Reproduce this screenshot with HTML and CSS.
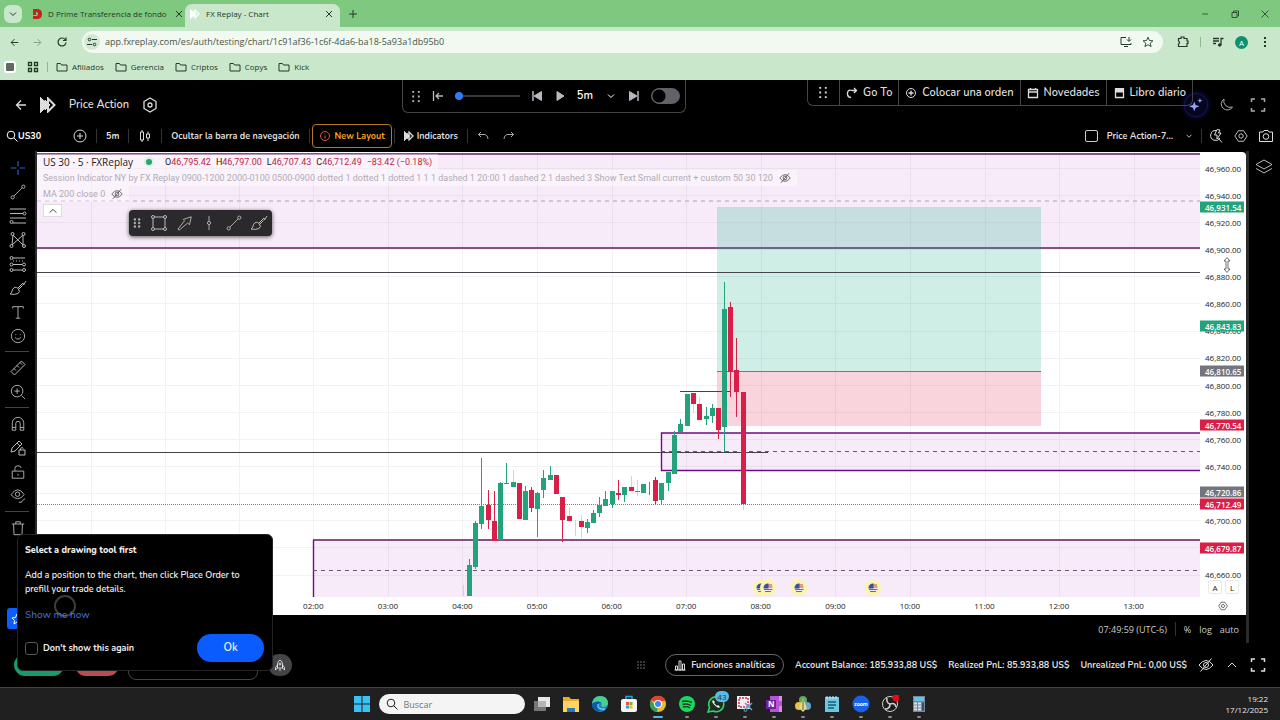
FILE: index.html
```html
<!DOCTYPE html>
<html lang="es">
    <head>
        <meta charset="UTF-8" />
        <meta name="viewport" content="width=device-width, initial-scale=1.0" />
        <title>FX Replay - Chart</title>
        <link rel="stylesheet" href="styles.css">
    </head>
    <body>
        <svg class="sprite" aria-hidden="true">
            <symbol id="close" viewBox="0 0 12 12"><path d="M3 3l6 6M9 3l-6 6" /></symbol>
            <symbol id="down" viewBox="0 0 12 12"><path d="M3 4.500l3 3 3-3" /></symbol>
            <symbol id="up" viewBox="0 0 12 12"><path d="M2 8l4-4 4 4" /></symbol>
            <symbol id="back" viewBox="0 0 12 12"><path d="M11 6H1.500M6 1.500L1.500 6 6 10.500" stroke-width="1.300" /></symbol>
            <symbol id="folder" viewBox="0 0 12 12"><path d="M1 2.500h3.500l1 1.500H11v6H1z" /></symbol>
            <symbol id="logo" viewBox="0 0 16 16"><path class="solid" d="M0 0l8 8-8 8z" /><path d="M8 1.500L14.500 8 8 14.500z" stroke-width="2" /><path class="solid" d="M5 3l5 5-5 5z" /></symbol>
            <symbol id="hex" viewBox="0 0 16 16"><path d="M8 1l6 3.500v7L8 15l-6-3.500v-7z" stroke-width="1.300" /><circle cx="8" cy="8" r="2" stroke-width="1.300" /></symbol>
            <symbol id="hexflat" viewBox="0 0 16 16"><path d="M5 2h6l4 6-4 6H5L1 8z" /><circle cx="8" cy="8" r="2.500" /></symbol>
            <symbol id="grip" viewBox="0 0 10 14"><path class="solid" d="M1 1h2v2H1zM7 1h2v2H7zM1 6h2v2H1zM7 6h2v2H7zM1 11h2v2H1zM7 11h2v2H7z" /></symbol>
            <symbol id="search" viewBox="0 0 12 12"><circle cx="5" cy="5" r="3.800" /><path d="M8 8l3.500 3.500" /></symbol>
            <symbol id="full" viewBox="0 0 16 16"><path d="M1.500 5V2H5M11 2h3.500v3M14.500 11v3H11M5 14H1.500v-3" stroke-width="1.500" /></symbol>
            <symbol id="eyeoff" viewBox="0 0 16 16"><path d="M1 8q7-9 14 0-7 9-14 0z" /><circle cx="8" cy="8" r="2.500" /><path d="M2.500 14.500l11-13" /></symbol>
            <symbol id="line" viewBox="0 0 18 18"><path d="M4.500 13.500l9-9" /><circle cx="3" cy="15" r="1.800" /><circle cx="15" cy="3" r="1.800" /></symbol>
            <symbol id="brush" viewBox="0 0 18 18"><path d="M1 15q2-1 2.500-4.500Q6 6.500 9 9.500t0 5Q6 16 1 15zM9 9l5-5 .5 2L17 2M9.500 10.500l4-4" /></symbol>
            <symbol id="flag" viewBox="0 0 16 16"><circle cx="8" cy="8" r="8" fill="#fbf6a6" /><circle cx="8" cy="8" r="4.500" fill="#eee4ec" /><path d="M8 5h4M8 7h4.500M4 9.500h8.500M5 11.500h6" stroke="#c9485f" /><path d="M8.500 3.500v5H3.500A4.500 4.500 0 0 1 8.500 3.500z" fill="#3c4f9b" /></symbol>
        </svg>

        <header class="browser">
            <div class="tabs">
                <button class="tab-search" aria-label="Buscar pestañas"><svg class="icon s12"><use href="#down" /></svg></button>
                <a class="tab" href="#">
                    <svg class="favicon" viewBox="0 0 10 10"><path d="M1 0h4q5 0 5 5t-5 5H1V7h4q2-2 0-4H4v3H1z" fill="#c5221f" /></svg>
                    <span class="tab-title">D Prime Transferencia de fondo</span>
                    <svg class="icon s12"><use href="#close" /></svg>
                </a>
                <a class="tab tab-active" href="#">
                    <svg class="favicon white"><use href="#logo" /></svg>
                    <span class="tab-title">FX Replay - Chart</span>
                    <svg class="icon s12"><use href="#close" /></svg>
                </a>
                <button class="new-tab" aria-label="Nueva pestaña"><svg class="icon s12" viewBox="0 0 12 12"><path d="M6 2v8M2 6h8" /></svg></button>
                <div class="window-buttons">
                    <button aria-label="Minimizar"><svg class="icon s12" viewBox="0 0 12 12"><path d="M3 6h6" stroke-width="0.700" /></svg></button>
                    <button aria-label="Restaurar"><svg class="icon s12" viewBox="0 0 12 12"><path d="M3 4.500h5v5H3zM4.500 4.500v-1.500h5V8H8" stroke-width="0.800" /></svg></button>
                    <button aria-label="Cerrar"><svg class="icon s12" viewBox="0 0 12 12"><path d="M2.500 2.500l7 7M9.500 2.500l-7 7" stroke-width="0.800" /></svg></button>
                </div>
            </div>
            <div class="address-row">
                <button aria-label="Atrás"><svg class="icon s9"><use href="#back" /></svg></button>
                <button class="forward" aria-label="Adelante"><svg class="icon s9 flip"><use href="#back" /></svg></button>
                <button aria-label="Recargar"><svg class="icon s12" viewBox="0 0 12 12"><path d="M9.500 4A4 4 0 1 0 10 6.500M10 1.500v3H7" stroke-width="1.200" /></svg></button>
                <div class="address">
                    <span class="site-info"><svg class="icon s12" viewBox="0 0 12 12"><circle cx="3.500" cy="3.500" r="1.300" /><circle cx="8.500" cy="8.500" r="1.300" /><path d="M6 3.500h5M1 8.500h5" /></svg></span>
                    <input class="url" type="text" aria-label="Dirección" value="app.fxreplay.com/es/auth/testing/chart/1c91af36-1c6f-4da6-ba18-5a93a1db95b0">
                    <svg class="icon s12" viewBox="0 0 12 12"><path d="M6 1.500H1v7h10V7M4 10.500h4M9 1v4M7 3.500l2 2 2-2" /></svg>
                    <svg class="icon s12" viewBox="0 0 12 12"><path d="M6 1.200l1.400 3.300 3.500.3-2.700 2.300.9 3.500L6 8.700l-3.100 1.900.9-3.500L1.100 4.800l3.500-.3z" stroke-width="0.900" /></svg>
                </div>
                <div class="extensions">
                    <svg class="icon s12" viewBox="0 0 12 12"><path d="M1.500 2.500H4V1h3v1.500h3V5h1v2.500h-1v3H1.500V8q2-1.500 0-3z" stroke-width="1.200" /></svg>
                    <span class="tick"></span>
                    <svg class="icon s12" viewBox="0 0 12 12"><path d="M1 2.500h6M1 5h6M1 7.500h3M9 9V2.500h2.500" stroke-width="1.300" /><circle class="solid" cx="7.700" cy="9" r="1.300" /></svg>
                    <span class="avatar">A</span>
                    <svg class="icon s12" viewBox="0 0 12 12"><path class="solid" d="M5 1h2v2H5zM5 5h2v2H5zM5 9h2v2H5z" stroke="none" /></svg>
                </div>
            </div>
            <nav class="bookmarks">
                <span class="app-square"></span>
                <svg class="icon s12" viewBox="0 0 12 12"><path d="M1.500 1.500h3v3h-3zM7.500 1.500h3v3h-3zM1.500 7.500h3v3h-3zM7.500 7.500h3v3h-3z" stroke-width="1.300" /></svg>
                <span class="tick"></span>
                <a href="#"><svg class="icon s12"><use href="#folder" /></svg>Afiliados</a>
                <a href="#"><svg class="icon s12"><use href="#folder" /></svg>Gerencia</a>
                <a href="#"><svg class="icon s12"><use href="#folder" /></svg>Criptos</a>
                <a href="#"><svg class="icon s12"><use href="#folder" /></svg>Copys</a>
                <a href="#"><svg class="icon s12"><use href="#folder" /></svg>Kick</a>
            </nav>
        </header>

        <div class="app">
            <div class="app-header">
                <button aria-label="Volver"><svg class="icon s12"><use href="#back" /></svg></button>
                <svg class="icon s16"><use href="#logo" /></svg>
                <h1 class="session-name">Price Action</h1>
                <button aria-label="Ajustes"><svg class="icon s16"><use href="#hex" /></svg></button>
                <div class="header-right">
                    <button class="ai" aria-label="Asistente"><svg class="icon s16" viewBox="0 0 16 16"><path class="solid" d="M6 4l1.500 4L12 9.500 7.500 11 6 15l-1.500-4L0 9.500 4.500 8zM12.500 0l.8 2.200 2.200.8-2.200.8-.8 2.200-.8-2.200L9.500 3l2.200-.8z" stroke="none" /></svg></button>
                    <button aria-label="Tema"><svg class="icon s16" viewBox="0 0 16 16"><path d="M6 2a6 6 0 1 0 8.500 8A6.500 6.500 0 0 1 6 2z" /></svg></button>
                    <button aria-label="Pantalla completa"><svg class="icon s16"><use href="#full" /></svg></button>
                </div>
                <div class="playback">
                    <svg class="icon grip"><use href="#grip" /></svg>
                    <button aria-label="Al inicio"><svg class="icon s12" viewBox="0 0 12 12"><path d="M1.500 1v10M11 6H4M7 3L4 6l3 3" stroke-width="1.300" /></svg></button>
                    <input class="speed" type="range" min="0" max="100" value="0" aria-label="Velocidad">
                    <button aria-label="Vela anterior"><svg class="icon s12" viewBox="0 0 12 12"><path d="M2 1v10" stroke-width="1.500" /><path class="solid" d="M10.500 1.500v9L3 6z" /></svg></button>
                    <button aria-label="Reproducir"><svg class="icon s12" viewBox="0 0 12 12"><path class="solid" d="M3 1.500v9L10 6z" /></svg></button>
                    <button class="step">5m<svg class="icon s12"><use href="#down" /></svg></button>
                    <button aria-label="Vela siguiente"><svg class="icon s12" viewBox="0 0 12 12"><path d="M10 1v10" stroke-width="1.500" /><path class="solid" d="M1.500 1.500v9L9 6z" /></svg></button>
                    <input class="switch" type="checkbox" aria-label="Modo automático">
                </div>
                <div class="actions">
                    <span class="action"><svg class="icon grip"><use href="#grip" /></svg></span>
                    <button class="action"><svg class="icon s12" viewBox="0 0 12 12"><path d="M5 10.500Q1 10 1.500 6T6 3.500h4M8 1l2.500 2.500L8 6" stroke-width="1.300" /></svg>Go To</button>
                    <button class="action"><svg class="icon s12" viewBox="0 0 12 12"><circle cx="6" cy="6" r="4.500" /><path d="M6 3.500v5M3.500 6h5" stroke-width="1.300" /></svg>Colocar una orden</button>
                    <button class="action"><svg class="icon s12" viewBox="0 0 12 12"><path d="M1.500 2.500h9v8h-9zM1.500 5h9M3.500 1v2M8.500 1v2" stroke-width="1.300" /></svg>Novedades</button>
                    <button class="action"><svg class="icon s12" viewBox="0 0 12 12"><path d="M2.500 2h8v8.500h-8z" stroke-width="1.300" /><path class="solid" d="M2.500 1.500h8V5h-8z" /></svg>Libro diario</button>
                </div>
            </div>

            <div class="toolbar">
                <button class="symbol"><svg class="icon s12"><use href="#search" /></svg>US30</button>
                <button aria-label="Comparar"><svg class="icon s14" viewBox="0 0 14 14"><circle cx="7" cy="7" r="6" /><path d="M7 4v6M4 7h6" /></svg></button>
                <span class="sep"></span>
                <button>5m</button>
                <span class="sep"></span>
                <button aria-label="Velas"><svg class="icon s14" viewBox="0 0 14 14"><path d="M2.500 3h3v8h-3zM4 1v2M4 11v2M8.500 5h3v4h-3zM10 2.500V5M10 9v3" /></svg></button>
                <span class="sep"></span>
                <button>Ocultar la barra de navegación</button>
                <div class="layout-group">
                    <span class="sep"></span>
                    <button class="new-layout"><svg class="icon s12" viewBox="0 0 12 12"><circle cx="6" cy="6" r="4.500" /><path d="M6 3.500v.8M6 5.500V8.500" /></svg>New Layout</button>
                    <span class="sep"></span>
                </div>
                <button class="indicators"><svg class="icon s10"><use href="#logo" /></svg>Indicators</button>
                <span class="sep"></span>
                <button class="muted" aria-label="Deshacer"><svg class="icon s12" viewBox="0 0 12 12"><path d="M4 2L1.500 4.500 4 7M1.500 4.500H7q3.500 0 4 4.500" /></svg></button>
                <button class="muted redo" aria-label="Rehacer"><svg class="icon s12 flip" viewBox="0 0 12 12"><path d="M4 2L1.500 4.500 4 7M1.500 4.500H7q3.500 0 4 4.500" /></svg></button>
                <div class="toolbar-right">
                    <label class="layout-check"><input type="checkbox">Price Action-7...</label>
                    <svg class="icon s10"><use href="#down" /></svg>
                    <span class="sep"></span>
                    <svg class="icon s14" viewBox="0 0 14 14"><path d="M7 1.500A5 5 0 1 0 11 9M9.500 9.500l3.500 4M8 .5L5.500 6H8v4l4-6H9.500L11 1z" /></svg>
                    <svg class="icon s14"><use href="#hexflat" /></svg>
                    <svg class="icon s14" viewBox="0 0 14 14"><path d="M.5 3h3.500l1-1.500h4L10 3h3.500v9.500H.5z" /><circle cx="7" cy="7.500" r="2.800" /></svg>
                </div>
            </div>

            <main class="workspace">
                <aside class="tools">
                    <button class="tool cross" aria-label="Cursor"><svg class="icon s16" viewBox="0 0 18 18"><path d="M9 1v6M9 11v6M1 9h6M11 9h6" stroke-width="1.300" /></svg></button>
                    <button class="tool" aria-label="Línea"><svg class="icon s16"><use href="#line" /></svg></button>
                    <button class="tool" aria-label="Fibonacci"><svg class="icon s18" viewBox="0 0 18 18"><path d="M1 2h16M1 6.500h13M1 11h16M4 16h13" /><circle cx="15.500" cy="6.500" r="1.500" /><circle cx="2.500" cy="15" r="1.500" /></svg></button>
                    <button class="tool" aria-label="Patrones"><svg class="icon s18" viewBox="0 0 18 18"><path d="M3 14L4 4l10 10V4L3 14M4 4l5 5M9 9l5 5" /><circle cx="3.500" cy="3" r="1.500" /><circle cx="14.500" cy="3" r="1.500" /><circle cx="2.500" cy="15" r="1.500" /><circle cx="15" cy="15" r="1.500" /></svg></button>
                    <button class="tool" aria-label="Previsión"><svg class="icon s18" viewBox="0 0 18 18"><path d="M4 3h12M4 9.500h9M4 15h9" /><path d="M4 6h10" stroke-dasharray="1 2" /><circle cx="2.500" cy="3" r="1.500" /><circle cx="2.500" cy="9.500" r="1.500" /><circle cx="15" cy="9.500" r="1.500" /><circle cx="2.500" cy="15" r="1.500" /><circle cx="15" cy="15" r="1.500" /></svg></button>
                    <button class="tool" aria-label="Pincel"><svg class="icon s18"><use href="#brush" /></svg></button>
                    <button class="tool" aria-label="Texto"><svg class="icon s16" viewBox="0 0 18 18"><path d="M3 5V3h12v2M9 3v13M6.500 16h5" /></svg></button>
                    <button class="tool" aria-label="Iconos"><svg class="icon s16" viewBox="0 0 18 18"><circle cx="9" cy="9" r="7.500" /><path d="M5.500 10.500q3.500 4 7 0M6.500 7v1M11.500 7v1" /></svg></button>
                    <hr>
                    <button class="tool" aria-label="Medir"><svg class="icon s18" viewBox="0 0 18 18"><path d="M2 12.500L12.500 2 16 5.500 5.500 16zM5 9.500l2 2M8 6.500l2 2M11 3.500l2 2" /></svg></button>
                    <button class="tool" aria-label="Acercar"><svg class="icon s16" viewBox="0 0 18 18"><circle cx="8" cy="8" r="6.500" /><path d="M8 5v6M5 8h6M13 13l4 4" /></svg></button>
                    <hr>
                    <button class="tool" aria-label="Imán"><svg class="icon s16" viewBox="0 0 18 18"><path d="M2.500 16V8a6.500 6.500 0 0 1 13 0v8h-4V8.500a2.500 2.500 0 0 0-5 0V16zM2.500 13h4M11.500 13h4" /></svg></button>
                    <button class="tool" aria-label="Modo dibujo"><svg class="icon s18" viewBox="0 0 18 18"><path d="M2 13l1-4 7-7 3 3-7 7zM8 4l3 3M10 11h6v5h-6zM11.500 11V9.500q1.500-2 3 0" /></svg></button>
                    <button class="tool" aria-label="Bloquear"><svg class="icon s16" viewBox="0 0 18 18"><path d="M2.500 8h13v8h-13zM5.500 8V5q0-3 3.500-3t3.500 2.500M9 11v2" /></svg></button>
                    <button class="tool" aria-label="Ocultar"><svg class="icon s16" viewBox="0 0 18 18"><path d="M1 7.500q8-11 15 0-7 9-15 0z" /><circle cx="8.500" cy="7" r="2.500" /><path d="M10 16q4 1 4-2l3-2" /></svg></button>
                    <hr>
                    <button class="tool" aria-label="Eliminar"><svg class="icon s16" viewBox="0 0 18 18"><path d="M2 4.500h14M6.500 4.500V2h5v2.500M4 4.500l.5 12h9l.5-12" /></svg></button>
                </aside>

                <div class="chart-column">
                    <div class="chart">
                        <div class="plot">
                            <svg class="plot-svg" viewBox="37 152 1163 445" preserveAspectRatio="none">
                                <path class="grid" d="M37 168.500H1200M37 195.500H1200M37 222.500H1200M37 249.500H1200M37 276.500H1200M37 303.500H1200M37 331.500H1200M37 358.500H1200M37 385.500H1200M37 412.500H1200M37 439.500H1200M37 466.500H1200M37 493.500H1200M37 520.500H1200M37 547.500H1200M37 575.500H1200" />
                                <path class="grid" d="M91.500 152V597M165.500 152V597M239.500 152V597M313.500 152V597M388.500 152V597M462.500 152V597M537.500 152V597M612.500 152V597M686.500 152V597M761.500 152V597M835.500 152V597M910.500 152V597M985.500 152V597M1059.500 152V597M1134.500 152V597" />

                                <!-- supply and demand zones -->
                                <path class="zone" d="M37 154H1200V248H37zM661 433H1200V470H661zM313 540H1200V597H313z" />
                                <path class="zone-edge" d="M37 154H1200M37 248H1200M313 540H1200" />
                                <path class="zone-box" d="M1200 433H661.500V470.500H1200M313.500 540V597" />
                                <path class="zone-mid faint" d="M37 201H1200" />
                                <path class="zone-mid" d="M661 451.500H1200M313 570.500H1200" />

                                <!-- position -->
                                <path fill="#0cac80" fill-opacity="0.200" d="M717 207H1041V372H717z" />
                                <path fill="#e0284f" fill-opacity="0.200" d="M717 372H1041V426H717z" />
                                <path class="level" d="M37 272.500H1200M37 452.500H768M680 391.500H730" />
                                <path class="level entry" d="M717 371.500H1041" />
                                <path class="last-price" d="M37 504.500H1200" />

                                <path class="wick pale" d="M463.500 585V596M513.500 470V482M569.500 507V516M575.500 520V536M581.500 515V538M631.500 476V487M637.500 480V496M693.500 404V413M699.500 397V404M743.500 505V510" />
                                <path class="wick up" d="M469.500 559V566M475.500 521V569M481.500 458V529M500.500 482V483M506.500 463V484M525.500 486V491M537.500 492V537M543.500 470V498M550.500 466V475M587.500 519V533M593.500 510V513M599.500 497V517M605.500 491V499M612.500 504V508M624.500 495V502M649.500 482V495M661.500 500V504M668.500 483V491M674.500 431V435M680.500 419V424M706.500 407V425M712.500 404V423M724.500 282V452M504 483.500H509M635 491.500H640" />
                                <path class="wick dn" d="M488.500 490V529M494.500 491V521M531.500 487V512M562.500 520V542M618.500 480V500M655.500 477V504M718.500 430V439M730.500 302V397M736.500 338V417" />
                                <path class="body up" d="M469.500 565V596M475.500 523V567M481.500 506V524M500.500 483V540M513.500 482V487M525.500 491V520M537.500 493V509M543.500 478V490M550.500 475V480M587.500 522V528M593.500 513V523M599.500 505V513M605.500 499V506M612.500 491V504M624.500 487V495M643.500 484V493M661.500 483V500M668.500 472V483M674.500 435V474M680.500 424V432M687.500 394V426M706.500 416V419M712.500 408V416M724.500 309V427" />
                                <path class="body dn" d="M488.500 505V520M494.500 521V541M519.500 483V519M531.500 490V508M556.500 475V494M562.500 497V520M569.500 516V521M581.500 521V527M618.500 493V495M631.500 487V491M655.500 480V501M693.500 393V404M699.500 404V420M718.500 408V430M730.500 307V372M736.500 370V392M743.500 392V504" />
                                <g>
                                    <use href="#flag" x="753" y="580" width="16" height="16" />
                                    <use href="#flag" x="760" y="580" width="16" height="16" />
                                    <use href="#flag" x="791" y="580" width="16" height="16" />
                                    <use href="#flag" x="865" y="580" width="16" height="16" />
                                </g>
                            </svg>

                            <div class="legend">
                                <p class="legend-main">
                                    <strong>US 30 · 5 · FXReplay</strong>
                                    <span class="dot"></span>
                                    <span class="ohlc">O<b>46,795.42</b></span>
                                    <span class="ohlc">H<b>46,797.00</b></span>
                                    <span class="ohlc">L<b>46,707.43</b></span>
                                    <span class="ohlc">C<b>46,712.49</b></span>
                                    <span class="ohlc"><b>−83.42 (−0.18%)</b></span>
                                </p>
                                <p class="legend-row">Session Indicator NY by FX Replay 0900-1200 2000-0100 0500-0900 dotted 1 dotted 1 dotted 1 1 1 dashed 1 20:00 1 dashed 2 1 dashed 3 Show Text Small current + custom 50 30 120 <svg class="icon s12"><use href="#eyeoff" /></svg></p>
                                <p class="legend-row">MA 200 close 0 <svg class="icon s12"><use href="#eyeoff" /></svg></p>
                                <button class="collapse" aria-label="Contraer"><svg class="icon s10"><use href="#up" /></svg></button>
                            </div>

                            <div class="favorites">
                                <svg class="icon s10"><use href="#grip" /></svg>
                                <button aria-label="Rectángulo"><svg class="icon s18" viewBox="0 0 18 18"><path d="M4.500 3h9M4.500 15h9M3 4.500v9M15 4.500v9" /><circle cx="3" cy="3" r="1.500" /><circle cx="15" cy="3" r="1.500" /><circle cx="3" cy="15" r="1.500" /><circle cx="15" cy="15" r="1.500" /></svg></button>
                                <button aria-label="Flecha"><svg class="icon s16" viewBox="0 0 18 18"><path d="M1 16L8.500 6.500 7 5l9-3-2 9-2-2L2.500 17z" /></svg></button>
                                <button aria-label="Línea vertical"><svg class="icon s16" viewBox="0 0 18 18"><path d="M9 1v6M9 11v6" /><circle cx="9" cy="9" r="1.800" /></svg></button>
                                <button aria-label="Línea de tendencia"><svg class="icon s16"><use href="#line" /></svg></button>
                                <button aria-label="Pincel"><svg class="icon s18"><use href="#brush" /></svg></button>
                            </div>
                        </div>

                        <div class="price-axis">
                            <span>46,960.00</span>
                            <span>46,940.00</span>
                            <span>46,920.00</span>
                            <span>46,900.00</span>
                            <span>46,880.00</span>
                            <span>46,860.00</span>
                            <span>46,840.00</span>
                            <span>46,820.00</span>
                            <span>46,800.00</span>
                            <span>46,780.00</span>
                            <span>46,760.00</span>
                            <span>46,740.00</span>
                            <span></span>
                            <span>46,700.00</span>
                            <span></span>
                            <span>46,660.00</span>
                            <b class="tag green" style="top: 12.4%">46,931.54</b>
                            <b class="tag green" style="top: 39.2%">46,843.83</b>
                            <b class="tag gray" style="top: 49.3%">46,810.65</b>
                            <b class="tag red" style="top: 61.4%">46,770.54</b>
                            <b class="tag gray" style="top: 76.5%">46,720.86</b>
                            <b class="tag red" style="top: 79.1%">46,712.49</b>
                            <b class="tag red" style="top: 88.9%">46,679.87</b>
                            <div class="scale-modes"><button>A</button><button>L</button></div>
                            <svg class="icon resize" viewBox="0 0 8 16"><path d="M4 .5l3 3.500H5v8h2l-3 3.500L1 12h2V4H1z" fill="#fff" /></svg>
                        </div>

                        <div class="time-axis">
                            <span>02:00</span>
                            <span>03:00</span>
                            <span>04:00</span>
                            <span>05:00</span>
                            <span>06:00</span>
                            <span>07:00</span>
                            <span>08:00</span>
                            <span>09:00</span>
                            <span>10:00</span>
                            <span>11:00</span>
                            <span>12:00</span>
                            <span>13:00</span>
                        </div>
                        <button class="axis-settings" aria-label="Ajustes de escala"><svg class="icon s10"><use href="#hexflat" /></svg></button>
                    </div>
                    <div class="chart-footer">
                        <span>07:49:59 (UTC-6)</span>
                        <span class="sep"></span>
                        <button>%</button>
                        <button>log</button>
                        <button>auto</button>
                    </div>
                </div>

                <aside class="side"><button aria-label="Capas"><svg class="icon s18" viewBox="0 0 18 18"><path d="M9 2l8 4.500L9 11 1 6.500zM1 10.500L9 15l8-4.500" /></svg></button></aside>
            </main>

            <footer class="account">
                <button class="pill buy" aria-label="Comprar"></button>
                <button class="pill sell" aria-label="Vender"></button>
                <button class="pill size" aria-label="Tamaño"></button>
                <button class="rocket" aria-label="Orden rápida"><svg class="icon s12" viewBox="0 0 12 12"><path d="M3.500 9V4.500Q4 2 6 1q2 1 2.500 3.500V9zM3.500 6L1.500 8.500V11L3.500 9M8.500 6l2 2.500V11l-2-2M5 11h2" /><circle cx="6" cy="5" r="1" /></svg></button>
                <div class="account-right">
                    <svg class="icon s10 dots" viewBox="0 0 10 10"><path class="solid" d="M1 1h2v2H1zM4 1h2v2H4zM7 1h2v2H7zM1 4h2v2H1zM4 4h2v2H4zM7 4h2v2H7zM1 7h2v2H1zM4 7h2v2H4zM7 7h2v2H7z" /></svg>
                    <button class="analytics"><svg class="icon s12" viewBox="0 0 12 12"><path d="M1.500 7h2v4h-2zM5 2h2v9H5zM8.500 5h2v6h-2zM.5 11h11" /></svg>Funciones analíticas</button>
                    <span>Account Balance: 185.933,88 US$</span>
                    <span>Realized PnL: 85.933,88 US$</span>
                    <span>Unrealized PnL: 0,00 US$</span>
                    <div class="account-icons">
                        <button aria-label="Ocultar saldo"><svg class="icon s16"><use href="#eyeoff" /></svg></button>
                        <button aria-label="Expandir"><svg class="icon s12"><use href="#up" /></svg></button>
                        <button aria-label="Pantalla completa"><svg class="icon s16"><use href="#full" /></svg></button>
                    </div>
                </div>
            </footer>

            <button class="star" aria-label="Favoritos"><svg class="icon s12" viewBox="0 0 12 12"><path d="M6 1l1.500 3.500 3.500.5-2.500 2.500.5 3.500L6 9l-3 2 .5-3.500L1 5l3.500-.5z" /></svg></button>
            <section class="popup" role="dialog" aria-labelledby="popup-title">
                <h2 class="popup-title" id="popup-title">Select a drawing tool first</h2>
                <p class="popup-text">Add a position to the chart, then click Place Order to prefill your trade details.</p>
                <a class="popup-link" href="#">Show me how</a>
                <div class="popup-bottom">
                    <label><input type="checkbox">Don't show this again</label>
                    <button class="ok">Ok</button>
                </div>
                <span class="ring"></span>
            </section>
        </div>

        <footer class="taskbar">
            <div class="task-items">
                <svg class="task" viewBox="0 0 18 18"><path d="M1 1h7.500v7.500H1zM9.500 1H17v7.500H9.500zM1 9.500h7.500V17H1zM9.500 9.500H17V17H9.500z" fill="#3cc1f5" /></svg>
                <label class="task-search"><svg class="icon s12"><use href="#search" /></svg><input type="text" placeholder="Buscar" aria-label="Buscar"></label>
                <svg class="task" viewBox="0 0 18 18"><path d="M1 6h12v10H1z" fill="#777" /><path d="M5 2h12v10H5z" fill="#e8e8e8" /><path d="M5 6h8v6H5z" fill="#b5b5b5" /></svg>
                <svg class="task" viewBox="0 0 18 18"><path d="M1 2h6l2 2h8v13H1z" fill="#e9a92b" /><path d="M1 6h16v11H1z" fill="#fcd462" /><path d="M5 13h8v4H5z" fill="#2a78b8" /></svg>
                <svg class="task" viewBox="0 0 18 18"><circle cx="9" cy="9" r="8" fill="#1b83d1" /><path d="M1 8Q3 1 9 1q8 0 8 8-1 3-5 3-3-1-1-3-1-4-10-1z" fill="#49ce8c" /><path d="M7 9q-3 5 3 7-8 1-9-6 3-5 9-3z" fill="#0c59a4" /><path d="M7 9q-1 6 7 5" fill="none" stroke="#9be5f0" /></svg>
                <svg class="task" viewBox="0 0 18 18"><path d="M6 5V1.500h6V5" fill="none" stroke="#28a0df" stroke-width="1.500" /><rect x="1" y="4" width="16" height="13" rx="2" fill="#f4f4f4" /><path d="M6 7h3v3H6z" fill="#ef5432" /><path d="M9.500 7h3v3h-3z" fill="#7cb82f" /><path d="M6 10.500h3v3H6z" fill="#20a4e8" /><path d="M9.500 10.500h3v3h-3z" fill="#fdb813" /></svg>
                <span class="running current"><svg class="task" viewBox="0 0 18 18"><circle cx="9" cy="9" r="8" fill="#e7bd29" /><path d="M9 9L2 5a8 8 0 0 1 14.500 1H9z" fill="#df4332" /><path d="M9 9l-1 8A8 8 0 0 1 2 5l4 6z" fill="#34a050" /><circle cx="9" cy="9" r="4" fill="#fff" /><circle cx="9" cy="9" r="3" fill="#4384ee" /></svg></span>
                <span class="running"><svg class="task" viewBox="0 0 18 18"><circle cx="9" cy="9" r="8" fill="#1ed760" /><path d="M4 6.500q5-1.500 10 1M4.500 9.500q4-1.500 8.500 1M5 12q4-1 7 .8" fill="none" stroke="#163b21" stroke-width="1.400" /></svg></span>
                <span class="running"><svg class="task" viewBox="0 0 18 18"><path d="M1 17l1.500-4.500A7.500 7.500 0 1 1 6 16z" fill="#19321f" stroke="#32d366" stroke-width="1.600" /><path d="M6 5q-2 2 2 5.500t5 1.500l-2-2-1 1-3-3 1-1z" fill="#fff" /></svg><b class="badge">43</b></span>
                <span class="running"><svg class="task" viewBox="0 0 18 18"><path d="M1 1h13v13H1z" fill="#f1edf0" /><path d="M3 3h9v9H3z" fill="none" stroke="#c73554" stroke-dasharray="2 1" stroke-width="1.500" /><path d="M9 8l7 7M16 8l-6 6" stroke="#5ba7d0" stroke-width="1.500" /><circle cx="9.500" cy="15" r="1.500" fill="none" stroke="#5ba7d0" /></svg></span>
                <span class="running"><svg class="task" viewBox="0 0 18 18"><path d="M5 1h12v16H5z" fill="#b454d6" /><path d="M14 1h3v5h-3zM14 11h3v6h-3z" fill="#d88cec" /><path d="M1 5h10v9H1z" fill="#71219c" /><text x="3" y="12" fill="#fff" font-size="8" font-weight="700" font-family="Open Sans, sans-serif">N</text></svg></span>
                <span class="running"><svg class="task" viewBox="0 0 18 18"><circle cx="9" cy="5" r="4" fill="#5ba75c" /><circle cx="5" cy="11" r="4" fill="#e4c448" /><circle cx="13" cy="11" r="4" fill="#62a4cf" /><path d="M9 3l4 10-4 4-4-4z" fill="#eed781" /><path d="M9 5v10" stroke="#4d6a6a" /></svg></span>
                <span class="running"><svg class="task" viewBox="0 0 18 18"><path d="M2 2h14v15H2z" fill="#6cc8de" /><path d="M4 1v3M7 1v3M10 1v3M13 1v3" stroke="#d9f3f8" /><path d="M5 7h8M5 10h8M5 13h6" stroke="#175d7a" stroke-width="1.300" /></svg></span>
                <span class="running"><svg class="task" viewBox="0 0 18 18"><circle cx="9" cy="9" r="8.500" fill="#1861e8" /><text x="9" y="11" text-anchor="middle" fill="#fff" font-size="5" font-weight="700" font-family="Open Sans, sans-serif">zoom</text></svg></span>
                <span class="running"><svg class="task" viewBox="0 0 18 18"><circle cx="9" cy="9" r="7.500" fill="#1c1c1c" stroke="#cfcfcf" /><path d="M9 9Q5 8 6 3M9 9q5-2 6 3M9 9q0 5-5 5" fill="none" stroke="#cfcfcf" stroke-width="1.600" /><circle cx="15" cy="3" r="3.500" fill="#e50914" /></svg></span>
                <span class="running"><svg class="task" viewBox="0 0 18 18"><path d="M3 1h12v16H3z" fill="#748a9a" /><path d="M4 2h10v4H4z" fill="#68c1e4" /><path d="M4 7.500h3v2H4zM8 7.500h3v2H8zM4 10.500h3v2H4zM8 10.500h3v2H8zM4 13.500h3v2H4zM8 13.500h3v2H8z" fill="#dce4e9" /><path d="M12 7.500h2v8h-2z" fill="#355169" /></svg></span>
            </div>
            <div class="clock"><time>19:22</time><time>17/12/2025</time></div>
        </footer>
    </body>
</html>
```

FILE: styles.css
```css
* {
    box-sizing: border-box;
    margin: 0;
    padding: 0;
}
body {
    display: flex;
    flex-direction: column;
    height: 100vh;
    min-height: 600px;
    overflow: hidden;
    background-color: #000;
    color: #ddd;
    font-family: "Nunito", "Lato", sans-serif;
    font-size: 11px;
    line-height: 14px;
}
button {
    display: flex;
    align-items: center;
    border: none;
    background: none;
    color: inherit;
    font: inherit;
    white-space: nowrap;
    cursor: pointer;
}
input {
    font: inherit;
}
a {
    color: inherit;
    text-decoration: none;
}
.sprite {
    position: absolute;
    width: 0;
    height: 0;
}
.icon {
    flex: none;
    fill: none;
    stroke: currentColor;
}
.solid {
    fill: currentColor;
}
.s9 { width: 9px; height: 9px; }
.s10 { width: 10px; height: 10px; }
.s12 { width: 12px; height: 12px; }
.s14 { width: 14px; height: 14px; }
.s16 { width: 16px; height: 16px; }
.s18 { width: 18px; height: 18px; }
.flip {
    transform: scaleX(-1);
}

/* browser */
.browser {
    flex: none;
    background-color: #c9e7ca;
    color: #26382a;
    font-family: "Segoe UI", "Open Sans", sans-serif;
    font-size: 8px;
    line-height: 12px;
}
.tabs {
    display: flex;
    align-items: center;
    height: 27px;
    padding-left: 4px;
    background-color: #7ec87f;
}
.tab-search {
    justify-content: center;
    width: 18px;
    height: 18px;
    border-radius: 6px;
    background-color: #c9e7ca;
}
.tab {
    display: flex;
    align-items: center;
    gap: 6px;
    width: 163px;
    height: 23px;
    margin-top: 4px;
    padding: 0 8px 4px 10px;
}
.tab-active {
    width: 155px;
    padding: 0 5px 4px;
    border-radius: 7px 7px 0 0;
    background-color: #c9e7ca;
}
.favicon {
    flex: none;
    width: 10px;
    height: 10px;
}
.white {
    color: #fff;
    fill: none;
    stroke: #fff;
}
.tab-title {
    flex: 1;
    white-space: nowrap;
}
.new-tab {
    margin-left: 7px;
}
.window-buttons {
    display: flex;
    gap: 18px;
    margin-left: auto;
    padding-right: 9px;
}
.address-row {
    display: flex;
    align-items: center;
    gap: 14px;
    height: 30px;
    padding: 0 10px;
}
.forward {
    color: #82a385;
}
.address {
    display: flex;
    flex: 1;
    align-items: center;
    gap: 10px;
    height: 22px;
    padding: 0 9px 0 2px;
    border-radius: 11px;
    background-color: #f1f9f1;
}
.site-info {
    display: flex;
    align-items: center;
    justify-content: center;
    width: 16px;
    height: 16px;
    border-radius: 8px;
    background-color: #d3e9d4;
}
.url {
    flex: 1;
    margin-left: -5px;
    border: none;
    background: none;
    color: #4a554b;
    font-size: 9px;
}
.extensions {
    display: flex;
    align-items: center;
    gap: 11px;
    margin-right: -1px;
}
.tick {
    width: 1px;
    height: 10px;
    background-color: #8dba90;
}
.avatar {
    width: 13px;
    height: 13px;
    border-radius: 7px;
    background-color: #0d8f70;
    color: #fff;
    line-height: 13px;
    text-align: center;
}
.bookmarks {
    display: flex;
    align-items: center;
    gap: 11px;
    height: 23px;
    padding: 0 4px 4px;
}
.bookmarks a {
    display: flex;
    align-items: center;
    gap: 4px;
}
.bookmarks .tick {
    margin-right: -3px;
    margin-left: -3px;
}
.app-square {
    width: 12px;
    height: 12px;
    border: 2px solid #fff;
    border-radius: 3px;
    background-color: #616963;
}

/* app */
.app {
    position: relative;
    display: flex;
    flex: 1;
    flex-direction: column;
    min-height: 0;
    border-bottom: 1px solid #444;
    font-weight: 600;
}
.app-header {
    position: relative;
    display: flex;
    align-items: center;
    gap: 13px;
    height: 40px;
    padding: 9px 14px 0 15px;
}
.session-name {
    font-size: 11px;
    font-weight: 600;
}
.header-right {
    display: flex;
    align-items: center;
    gap: 16px;
    margin-left: auto;
    color: #aaa;
}
.ai {
    justify-content: center;
    width: 24px;
    height: 24px;
    border: 1px solid #151850;
    border-radius: 12px;
    background-color: #05051e;
    box-shadow: 0 0 5px #11126b;
    color: #8fa5ff;
}
.header-right .ai {
    margin-right: -6px;
}
.ai .icon {
    width: 14px;
    height: 14px;
}
.playback,
.actions {
    position: absolute;
    top: 0;
    display: flex;
    border: 1px solid #444;
    border-top: none;
    border-radius: 0 0 6px 6px;
    color: #ddd;
}
.playback {
    left: 50%;
    align-items: center;
    justify-content: space-between;
    width: 284px;
    height: 33px;
    margin-left: -238px;
    padding: 0 5px 0 8px;
    color: #b9b7c0;
}
.grip {
    width: 10px;
    height: 13px;
    stroke: none;
}
.speed {
    width: 65px;
    height: 8px;
    appearance: none;
    background: linear-gradient(#3a3a3a, #3a3a3a) center / 100% 2px no-repeat;
}
.speed::-webkit-slider-thumb {
    width: 8px;
    height: 8px;
    appearance: none;
    border-radius: 4px;
    background-color: #2f7bf6;
}
.step {
    gap: 12px;
    color: #fff;
    font-size: 11px;
}
.switch {
    width: 29px;
    height: 16px;
    appearance: none;
    border: 1px solid #626268;
    border-radius: 8px;
    background: radial-gradient(circle at 7px 7px, #000 6px, #626268 7px);
}
.actions {
    right: 87px;
    height: 26px;
}
.action {
    display: flex;
    align-items: center;
    gap: 5px;
    padding: 0 6px;
    border-right: 1px solid #444;
}
.action:first-child {
    padding: 0 11px 0 10px;
}
.action:last-child {
    border-right: none;
}
.toolbar {
    display: flex;
    align-items: center;
    gap: 9px;
    height: 31px;
    padding: 0 7px 0 6px;
    font-size: 9px;
    font-weight: 700;
}
.symbol {
    width: 58px;
    color: #fff;
}
.toolbar .sep,
.chart-footer .sep {
    width: 1px;
    height: 14px;
    background-color: #333;
}
.layout-group {
    display: flex;
    align-items: center;
    gap: 2px;
}
.new-layout {
    gap: 4px;
    height: 24px;
    padding: 0 6px;
    border: 1px solid #b37a22;
    border-radius: 4px;
    color: #f5a623;
}
.new-layout .icon {
    color: #e0563e;
}
.indicators {
    gap: 3px;
}
.muted {
    color: #aaa;
}
.redo {
    margin-left: 5px;
}
.toolbar-right {
    display: flex;
    align-items: center;
    gap: 11px;
    margin-left: auto;
}
.toolbar-right .sep {
    margin: 0 -4px;
}
.layout-check {
    display: flex;
    align-items: center;
    gap: 9px;
}
.layout-check input {
    width: 13px;
    height: 12px;
    appearance: none;
    border: 1px solid #ccc;
    border-radius: 2px;
}
.workspace {
    display: flex;
    flex: 1;
    min-height: 0;
}
.tools {
    width: 37px;
    padding-top: 5px;
    border-right: 2px solid #2b2b2d;
    color: #bbb;
}
.tool {
    justify-content: center;
    width: 35px;
    height: 24px;
}
.tools hr {
    margin: 3px 6px 4px 5px;
    border: none;
    border-top: 1px solid #444;
}
.cross {
    color: #2f5fd8;
}
.chart-column {
    display: flex;
    flex: 1;
    flex-direction: column;
    min-width: 0;
    padding-top: 1px;
    border-right: 3px solid #2b2b2d;
    font-family: "Trebuchet MS", "Open Sans", sans-serif;
    font-size: 8px;
    font-weight: 400;
    line-height: 11px;
}
.chart {
    display: grid;
    flex: 1;
    grid-template-rows: minmax(0, 1fr) 18px;
    grid-template-columns: minmax(0, 1fr) 46px;
    min-height: 0;
    border-radius: 0 4px 0 0;
    background-color: #fff;
    color: #222;
}
.plot {
    position: relative;
    min-height: 0;
}
.plot-svg {
    display: block;
    width: 100%;
    height: 100%;
}
.plot-svg path {
    stroke-width: 1;
}
.plot-svg .grid {
    fill: none;
    stroke: #f2f2f3;
}
.zone {
    fill: #ac38c8;
    fill-opacity: 0.1;
}
.plot-svg .zone-edge {
    stroke: #845088;
    stroke-width: 2;
}
.plot-svg .zone-box {
    fill: none;
    stroke: #6d0b80;
    stroke-width: 1.4;
}
.zone-mid {
    stroke: #71507b;
    stroke-dasharray: 4 4;
}
.plot-svg .faint {
    stroke: #dcc0dc;
    stroke-width: 2;
}
.level {
    stroke: #46424b;
}
.entry {
    stroke: #76787a;
}
.last-price {
    stroke: #c75d70;
    stroke-dasharray: 1 1;
}
.up {
    stroke: #22a37c;
}
.dn {
    stroke: #d91f47;
}
.pale {
    stroke: #ecc8ce;
}
.plot-svg .body {
    stroke-width: 5;
}
.legend {
    position: absolute;
    top: 2px;
    left: 0;
    color: #b2abb5;
    font-family: "Roboto", sans-serif;
    font-size: 9px;
    white-space: nowrap;
}
.legend p {
    display: flex;
    align-items: center;
    width: max-content;
    height: 16px;
    padding: 0 6px;
    background-color: rgba(255, 255, 255, 0.4);
}
.legend .legend-main {
    gap: 5px;
    color: #222;
}
.legend strong {
    font-family: "Trebuchet MS", "Open Sans", sans-serif;
    font-size: 10px;
    font-weight: 500;
}
.legend-row .icon {
    margin-left: 6px;
    color: #444;
}
.dot {
    width: 6px;
    height: 6px;
    margin: 0 8px;
    border-radius: 3px;
    background-color: #2ba36d;
    box-shadow: 0 0 0 2px #d8f0e2;
}
.ohlc b {
    color: #bd2346;
    font-weight: 400;
}
.collapse {
    justify-content: center;
    width: 19px;
    height: 13px;
    margin: 2px 0 0 6px;
    border: 1px solid #ddd;
    background-color: #fff;
    color: #222;
}
.favorites {
    position: absolute;
    top: 58px;
    left: 92px;
    display: flex;
    align-items: center;
    justify-content: space-between;
    width: 143px;
    height: 26px;
    padding: 0 4px 0 3px;
    border-radius: 4px;
    background-color: #2a292c;
    box-shadow: 0 1px 4px #555;
    color: #bbb;
}
.price-axis {
    position: relative;
    display: flex;
    flex-direction: column;
    padding: 3px 0 9px;
}
.price-axis span {
    display: flex;
    flex: 1;
    align-items: center;
    min-height: 0;
    padding-left: 5px;
}
.tag {
    position: absolute;
    left: 0;
    width: 44px;
    padding-left: 5px;
    color: #fff;
    font-weight: 600;
    transform: translateY(-50%);
}
.green {
    background-color: #22a37c;
}
.red {
    background-color: #d91f47;
}
.gray {
    background-color: #74757c;
}
.scale-modes {
    position: absolute;
    right: 7px;
    bottom: 3px;
    display: flex;
    gap: 3px;
    background-color: #fff;
}
.scale-modes button {
    justify-content: center;
    width: 14px;
    height: 14px;
    border: 1px solid #e8e8e8;
    border-radius: 2px;
}
.resize {
    position: absolute;
    top: 105px;
    left: 23px;
    width: 8px;
    height: 16px;
    stroke: #333;
    stroke-width: 0.7;
}
.time-axis {
    display: flex;
    align-items: center;
    padding: 0 29px 1px 239px;
}
.time-axis span {
    flex: 1;
    text-align: center;
}
.axis-settings {
    justify-content: center;
}
.chart-footer {
    display: flex;
    align-items: center;
    justify-content: flex-end;
    gap: 8px;
    height: 28px;
    padding-right: 7px;
    color: #ccc;
    font-size: 9px;
}
.side {
    width: 31px;
    padding: 7px 0 0 6px;
    color: #bbb;
}
.account {
    display: flex;
    align-items: center;
    height: 44px;
    padding: 0 14px;
    font-size: 9px;
    font-weight: 700;
}
.pill {
    width: 50px;
    height: 22px;
    border-radius: 11px;
}
.buy {
    background-color: #199b72;
}
.sell {
    width: 44px;
    margin-left: 11px;
    background-color: #b94c50;
}
.size {
    width: 130px;
    height: 29px;
    margin-left: 9px;
    border: 1px solid #444;
    border-radius: 8px;
}
.rocket {
    justify-content: center;
    width: 24px;
    height: 22px;
    margin-left: 10px;
    border-radius: 11px;
    background-color: #454548;
}
.account-right {
    display: flex;
    align-items: center;
    gap: 11px;
    margin-left: auto;
}
.dots {
    margin-right: 8px;
    stroke: #000;
}
.analytics {
    gap: 5px;
    height: 22px;
    padding: 0 8px;
    border: 1px solid #666;
    border-radius: 11px;
}
.account-icons {
    display: flex;
    align-items: center;
    gap: 12px;
}
.star {
    position: absolute;
    bottom: 58px;
    left: 7px;
    width: 20px;
    height: 21px;
    padding-left: 4px;
    border-radius: 3px;
    background-color: #0b5fff;
    color: #fff;
}
.popup {
    position: absolute;
    bottom: 16px;
    left: 17px;
    width: 256px;
    height: 137px;
    padding: 8px 8px 0 7px;
    border: 1px solid #242426;
    border-radius: 6px;
    background-color: #000;
    color: #eee;
    font-size: 9px;
}
.popup-title {
    font-size: 9px;
    font-weight: 800;
}
.popup-text {
    margin-top: 11px;
}
.popup-link {
    display: block;
    margin-top: 12px;
    color: #3f6fce;
    font-size: 10px;
    font-weight: 500;
}
.popup-bottom {
    display: flex;
    align-items: center;
    justify-content: space-between;
    margin-top: 12px;
}
.popup-bottom label {
    display: flex;
    align-items: center;
    gap: 5px;
    font-weight: 700;
}
.popup-bottom input {
    width: 13px;
    height: 13px;
    appearance: none;
    border: 1px solid #555;
    border-radius: 3px;
}
.ok {
    justify-content: center;
    width: 67px;
    height: 28px;
    border-radius: 14px;
    background-color: #0a5cff;
    font-size: 11px;
}
.ring {
    position: absolute;
    top: 60px;
    left: 36px;
    width: 22px;
    height: 22px;
    border: 2px solid rgba(150, 150, 150, 0.4);
    border-radius: 11px;
}

/* taskbar */
.taskbar {
    display: grid;
    flex: none;
    grid-template-columns: 1fr auto 1fr;
    align-items: center;
    height: 32px;
    background-color: #202020;
    font-family: "Segoe UI", "Open Sans", sans-serif;
    font-size: 8px;
    line-height: 11px;
}
.task-items {
    display: flex;
    grid-column: 2;
    align-items: center;
    gap: 11px;
}
.task {
    display: block;
    width: 18px;
    height: 18px;
}
.task-search {
    display: flex;
    align-items: center;
    gap: 6px;
    width: 146px;
    height: 20px;
    margin: 0 -3px;
    padding: 0 7px;
    border-radius: 10px;
    background-color: #f4f4f4;
    color: #222;
}
.task-search input {
    width: 100px;
    border: none;
    background: none;
    font-size: 9px;
}
.running {
    position: relative;
}
.running::after {
    position: absolute;
    bottom: -5px;
    left: 7px;
    width: 4px;
    height: 2px;
    border-radius: 1px;
    background-color: #8a8a8a;
    content: "";
}
.current::after {
    left: 4px;
    width: 10px;
    background-color: #5fb2e6;
}
.badge {
    position: absolute;
    top: -4px;
    right: -4px;
    padding: 0 2px;
    border-radius: 6px;
    background-color: #5db9e8;
    color: #14374a;
    font-weight: 400;
}
.clock {
    display: flex;
    flex-direction: column;
    align-items: flex-end;
    padding-right: 12px;
    color: #e6e6e6;
}
```
